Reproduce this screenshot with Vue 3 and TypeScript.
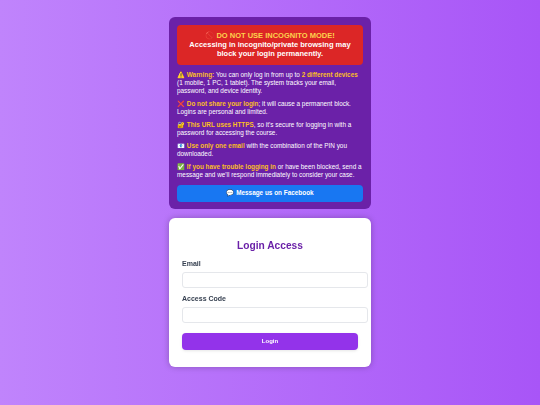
<script setup lang="ts">
interface Note { icon: string; lead: string; rest: string; extra?: string; tail?: string }
const notes: Note[] = [
  { icon: '⚠️', lead: 'Warning:', rest: ' You can only log in from up to ', extra: '2 different devices', tail: ' (1 mobile, 1 PC, 1 tablet). The system tracks your email, password, and device identity.' },
  { icon: '❌', lead: 'Do not share your login', rest: '; it will cause a permanent block. Logins are personal and limited.' },
  { icon: '🔐', lead: 'This URL uses HTTPS', rest: ', so it\'s secure for logging in with a password for accessing the course.' },
  { icon: '📧', lead: 'Use only one email', rest: ' with the combination of the PIN you downloaded.' },
  { icon: '✅', lead: 'If you have trouble logging in', rest: ' or have been blocked, send a message and we\'ll respond immediately to consider your case.' },
]
</script>

<template>
  <main class="page">
    <section class="panel">
      <div class="alert">
        <div class="alert-title">🚫 DO NOT USE INCOGNITO MODE!</div>
        <div>Accessing in incognito/private browsing may block your login permanently.</div>
      </div>
      <p v-for="n in notes" :key="n.lead" class="note">
        {{ n.icon }} <strong>{{ n.lead }}</strong>{{ n.rest }}<strong v-if="n.extra">{{ n.extra }}</strong>{{ n.tail }}
      </p>
      <a class="fb">💬 Message us on Facebook</a>
    </section>
    <section class="card">
      <h1>Login Access</h1>
      <label for="email">Email</label>
      <input id="email" type="email" />
      <label for="code">Access Code</label>
      <input id="code" type="text" />
      <button type="button">Login</button>
    </section>
  </main>
</template>

<style>
body { margin: 0; }
</style>

<style scoped>
.page {
  width: 540px;
  height: 405px;
  overflow: hidden;
  background: linear-gradient(90deg, #c084fc, #a855f7);
  font-family: "Liberation Sans", Arial, sans-serif;
  display: flex;
  flex-direction: column;
  align-items: center;
  padding-top: 17px;
  box-sizing: border-box;
  gap: 9px;
}
.panel {
  width: 202px;
  height: 192px;
  box-sizing: border-box;
  padding: 8px;
  background: #6b21a8;
  border-radius: 6px;
  color: #fff;
}
.alert {
  background: #dc2626;
  border-radius: 4px;
  height: 40px;
  box-sizing: border-box;
  padding: 6px 8px;
  text-align: center;
  font-size: 7.5px;
  line-height: 9px;
  font-weight: 700;
  margin-bottom: 6px;
}
.alert-title { color: #fcd34d; }
.note {
  margin: 0 0 5px;
  font-size: 6.4px;
  line-height: 8px;
}
.note strong { color: #fbbf24; }
.fb {
  display: block;
  height: 16.5px;
  line-height: 16.5px;
  background: #1877f2;
  border-radius: 4px;
  text-align: center;
  font-size: 6.4px;
  font-weight: 700;
  margin-top: 6px;
}
.card {
  width: 202px;
  height: 149px;
  box-sizing: border-box;
  padding: 21px 13px 0;
  background: #fff;
  border-radius: 6px;
  box-shadow: 0 0 6px rgba(0, 0, 0, 0.25);
  will-change: transform;
}
h1 {
  margin: 0 0 8px;
  font-size: 10.2px;
  line-height: 13px;
  text-align: center;
  color: #6b21a8;
}
label {
  display: block;
  font-size: 7px;
  line-height: 8px;
  font-weight: 700;
  color: #374151;
  margin-bottom: 3.7px;
}
input {
  display: block;
  width: 186px;
  height: 16.5px;
  box-sizing: border-box;
  border: 1px solid #e5e7eb;
  border-radius: 3px;
  background: #fff;
  margin-bottom: 7px;
  padding: 0 5px;
}
button {
  display: block;
  width: 176px;
  height: 17px;
  margin-top: 9.5px;
  background: #9333ea;
  color: #fff;
  border: 0;
  border-radius: 4px;
  font: 700 6px "Liberation Sans", Arial, sans-serif;
  box-shadow: 0 1px 3px rgba(0, 0, 0, 0.1);
}
</style>
